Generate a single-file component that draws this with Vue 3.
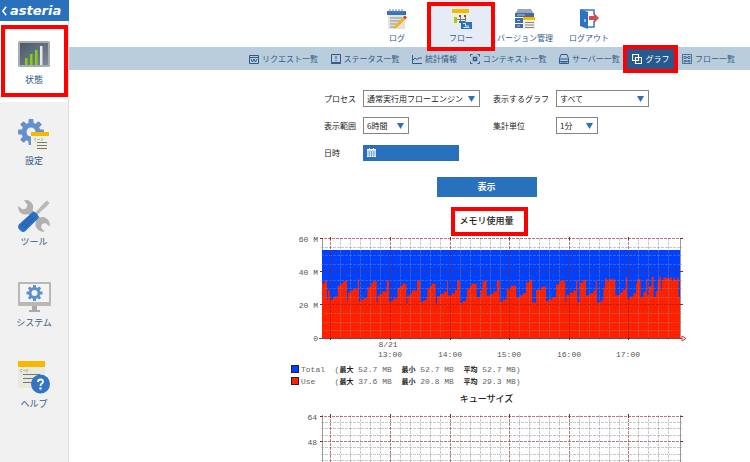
<script setup>
import { ref } from 'vue'

const process = ref('通常実行用フローエンジン')
const graph = ref('すべて')
const range = ref('6時間')
const unit = ref('1分')
const date = ref('')

const gap = '  '
const legend = [
  { key: 'total', text: 'Total  (', max: ' 52.7 MB', min: ' 52.7 MB', avg: ' 52.7 MB)' },
  { key: 'use', text: 'Use    (', max: ' 37.6 MB', min: ' 20.8 MB', avg: ' 29.3 MB)' },
]

const hours = [
  { x: 44, label: '' },
  { x: 104, label: '13:00' },
  { x: 164, label: '14:00' },
  { x: 223, label: '15:00' },
  { x: 283, label: '16:00' },
  { x: 342, label: '17:00' },
]
const minorX = []
hours.forEach((h) => {
  for (let i = 1; i < 6; i++) {
    const x = h.x + Math.round(i * 9.93)
    if (x < 392) minorX.push(x)
  }
})
const minorY = [11, 19, 28, 44, 52, 61, 77, 86, 94]
const minorQueueY = [9, 15, 22, 34, 41, 47]

// Steps of used memory: [start, level], three units to a pixel
const usage = [
  [126, 248], [134, 241], [141, 297], [144, 270], [149, 298], [159, 292], [163, 288], [173, 256],
  [181, 250], [189, 243], [195, 241], [201, 300], [204, 276], [213, 270], [219, 265], [233, 236],
  [237, 303], [243, 298], [250, 293], [262, 260], [272, 250], [278, 242], [290, 307], [293, 285],
  [299, 280], [306, 273], [320, 240], [327, 304], [334, 300], [340, 294], [352, 262], [362, 255],
  [368, 250], [379, 309], [382, 285], [390, 278], [396, 270], [411, 240], [421, 304], [430, 299],
  [440, 290], [442, 264], [450, 256], [456, 250], [467, 309], [471, 287], [480, 280], [492, 274],
  [501, 242], [504, 285], [515, 278], [525, 268], [531, 241], [540, 307], [548, 302], [558, 293],
  [561, 264], [570, 256], [575, 250], [590, 290], [601, 270], [607, 245], [612, 241], [620, 285],
  [630, 280], [640, 273], [650, 241], [659, 303], [668, 297], [680, 266], [692, 256], [709, 290],
  [720, 284], [728, 278], [738, 246], [748, 238], [757, 306], [768, 268], [784, 258], [798, 301],
  [807, 296], [816, 290], [828, 252], [839, 241], [856, 305], [859, 283], [870, 276], [880, 270],
  [888, 240], [892, 304], [900, 246], [910, 238], [918, 285], [928, 278], [940, 270], [947, 241],
  [951, 306], [962, 300], [970, 262], [975, 234], [982, 242], [986, 236], [1006, 284], [1020, 276],
  [1028, 268], [1037, 230], [1042, 295], [1050, 288], [1060, 278], [1068, 250], [1071, 236],
  [1082, 290], [1090, 275], [1098, 235], [1102, 285], [1107, 257], [1115, 229], [1121, 290],
  [1127, 272], [1133, 240], [1138, 228], [1143, 270], [1146, 240], [1150, 232], [1167, 235],
  [1171, 229], [1175, 240], [1180, 232], [1185, 238], [1192, 230], [1196, 290],
]
const usagePath = 'M126 413' + usage.map(([x, y]) => `H${x}V${y}`).join('') + 'H1200V413Z'
</script>

<template>
  <div class="shell">
    <aside class="sidebar">
      <a class="brand" href="#">
        <svg class="back" viewBox="0 0 6 12"><path d="M5 1 1 6l4 5" /></svg>
        <span>asteria</span>
      </a>

      <a class="tile active marked" href="#">
        <svg viewBox="0 0 32 32">
          <defs>
            <linearGradient id="screen" x1="0" y1="0" x2="1" y2="1">
              <stop offset="0" stop-color="#4b5a67" /><stop offset="1" stop-color="#7b8792" />
            </linearGradient>
          </defs>
          <rect y="3" width="32" height="26" rx="1.500" fill="#a6adb3" />
          <rect x="2" y="5" width="28" height="22" fill="url(#screen)" />
          <path d="M7 27v-7h2.500v7zM12 27V16h2.500v11zM17 27V12h2.500v15z" fill="#84cf13" />
          <path d="M22 27V8h2.500v19z" fill="#e5e8ea" />
        </svg>
        <span>状態</span>
      </a>

      <a class="tile" href="#">
        <svg viewBox="0 0 32 32">
          <g fill="#658fce">
            <circle cx="13" cy="13" r="9.5" />
            <g>
              <rect v-for="a in 4" :key="a" x="10.500" y="0" width="5" height="26" rx="1" :transform="`rotate(${a * 45} 13 13)`" />
            </g>
          </g>
          <circle cx="13" cy="13" r="4.500" fill="#f1f1f1" />
          <path d="M13 13h18v18H13z" fill="#f0f0e4" />
          <path d="M13 13h18v4H13z" fill="#f9b800" />
          <path d="m18 19-2 1.500 2 1.500m5-3 2 1.500-2 1.500M19 20.500h3" fill="none" stroke="#999" stroke-width=".7" />
          <path d="M19 23.500h10M19 26.500h10M19 29.500h10" stroke="#777" />
        </svg>
        <span>設定</span>
      </a>

      <a class="tile" href="#">
        <svg viewBox="0 0 32 32">
          <path d="M6 .5a7 7 0 0 1 8.500 9.500L22 17.500a7.500 7.500 0 0 1 9.500 9l-4-3.500-3.500 1-1 3.500 3.500 4a7.500 7.500 0 0 1-8.500-10L10 14A7 7 0 0 1 .5 6l4 3.500L8 8.500 9.500 5z" fill="#b1b1b1" />
          <path d="m17 13 9-10 3-2.500 2.500 2.500L29 6 19 15z" fill="#b9b9b9" />
          <path d="M14 12.500q2-1.500 4 .5l1.500 1.500q2 2 .5 4L7.500 31q-2.500 2-4.500 0L.8 29q-1.500-2 0-4.500z" fill="#2c70c4" />
          <path d="M13 16 3.500 26M15.500 18 6 28" stroke="#1f59a5" />
        </svg>
        <span>ツール</span>
      </a>

      <a class="tile" href="#">
        <svg viewBox="0 0 32 32">
          <rect y="1" width="33" height="24" rx="1" fill="#b8b8b8" />
          <path d="M2 3h29v18H2z" fill="#f4f4f4" />
          <path d="M14 25h5v4h3v2H11v-2h3z" fill="#aaa" />
          <g fill="#5c91cc">
            <circle cx="16.500" cy="12" r="6" />
            <rect v-for="a in 4" :key="a" x="15" y="4" width="3" height="16" rx=".5" :transform="`rotate(${a * 45} 16.5 12)`" />
          </g>
          <circle cx="16.500" cy="12" r="3" fill="#f4f4f4" />
        </svg>
        <span>システム</span>
      </a>

      <a class="tile" href="#">
        <svg viewBox="0 0 32 32">
          <path d="M0 0h27v26H0z" fill="#e7eadc" />
          <path d="M0-1h27v6H0z" fill="#f9b800" />
          <path d="M4 7 2 8.500 4 10m4-3 2 1.500L8 10M5 8.500h3" fill="none" stroke="#999" stroke-width=".7" />
          <path d="M5 12.500h17M5 16.500h12M5 20.500h9" stroke="#777" />
          <circle cx="22.500" cy="22" r="9.500" fill="#3274c6" />
          <path d="M20 20q0-2.500 2.500-2.500T25 19.700q0 1.300-1.300 1.900T22.500 24" fill="none" stroke="#fff" stroke-width="1.800" />
          <circle cx="22.500" cy="26.500" r="1.200" fill="#fff" />
        </svg>
        <span>ヘルプ</span>
      </a>
    </aside>

    <div class="page">
      <nav class="topnav">
        <a href="#">
          <svg viewBox="0 0 20 20">
            <path d="M1 2h17v18H1z" fill="#e4e4de" />
            <path d="M0 2h19v4H0z" fill="#2d75c2" />
            <path d="M3 0v4M6 0v4M9 0v4M12 0v4M15 0v4" stroke="#70859b" />
            <path d="M3 9h12M3 12h11M3 15h8M3 18h5" stroke="#8d8f91" />
            <path d="m16.500 8 2 2L10 18.500 7 20l1-3.500z" fill="#f5b21a" />
            <path d="m16 8 2-1.500 2 2L18 10.500z" fill="#e33b2e" />
          </svg>
          <span>ログ</span>
        </a>
        <a class="current marked" href="#">
          <svg viewBox="0 0 20 20">
            <path d="M1 0h17v15H1z" fill="#efefdc" />
            <path d="M1 0h17v4H1z" fill="#f9b800" />
            <path d="M3 8h3v6H3z" fill="#9bcd25" />
            <path d="M6 10.500h9M9.500 7v6M14.500 7v5" stroke="#777" fill="none" />
            <path d="M8 6h2v2H8zM13 6h2v2h-2zM8 12h2v2H8z" fill="#657" />
            <path d="M10 12h4l1 1h6v7H10z" fill="#2c72c0" />
            <path d="M12 14.500h2.500V17H18M12.500 18.500h6" stroke="#d8e7f7" fill="none" />
          </svg>
          <span>フロー</span>
        </a>
        <a href="#">
          <svg viewBox="0 0 20 20">
            <path d="M3 0h13l3 5H0z" fill="#9ca7b4" />
            <path d="M0 4h19v4H0zM0 9h8v5H0zM0 15h8v4H0z" fill="#456b9e" />
            <path d="M2 6h8M2 11.500h3M2 17h3" stroke="#adc3df" />
            <path d="M8 8h12v12H8z" fill="#f0f0e2" />
            <path d="M8 8h12v3H8z" fill="#f9b800" />
            <path d="M10 13.500h9M10 16h9M10 18.500h9" stroke="#888" />
          </svg>
          <span>バージョン管理</span>
        </a>
        <a href="#">
          <svg viewBox="0 0 20 20">
            <path d="M2 1h13v5M15 12v6H8" fill="none" stroke="#3678c3" stroke-width="1.500" />
            <path d="m1 0 8 3v17l-8-3z" fill="#2e73c2" />
            <path d="M6 10v3" stroke="#fff" />
            <path d="M10 7h5V4l5 5-5 5v-3h-5z" fill="#d74a4a" />
          </svg>
          <span>ログアウト</span>
        </a>
      </nav>

      <nav class="subnav">
        <a href="#">
          <svg viewBox="0 0 10 10"><path d="M.5 1.500h9v8h-9zM.5 3.500h9M2 5l1.500 3L5 5l1.500 3L8 5" /></svg>
          リクエスト一覧
        </a>
        <a href="#">
          <svg viewBox="0 0 10 10"><path d="M.5.5h9v8h-9zM0 9.500h10M5 2v3M5 6v1" /></svg>
          ステータス一覧
        </a>
        <a href="#">
          <svg viewBox="0 0 10 10"><path d="M.5 1v8.500H10M1 6l2-2 2 1.500L7 4h3" /></svg>
          統計情報
        </a>
        <a href="#">
          <svg viewBox="0 0 10 10"><path d="M2.500.5h-2v2M7.500.5h2v2M.5 7.500v2h2M9.500 7.500v2h-2" /><path d="M3.500 3.500h3v3h-3z" stroke-width="1.500" /></svg>
          コンテキスト一覧
        </a>
        <a href="#">
          <svg viewBox="0 0 10 10"><path d="M2 .5h6l1.500 4v5h-9v-5zM.5 5h9M.5 7.500h9M2 9h6" /></svg>
          サーバー一覧
        </a>
        <a class="current marked" href="#">
          <svg viewBox="0 0 10 10"><path d="M.5.5h6v6h-6zM3.500 3.500h6v6h-6z" stroke-width="1.200" /></svg>
          グラフ
        </a>
        <a href="#">
          <svg viewBox="0 0 10 10"><path d="M.5.5h9v9h-9zM2 2.500h2v2H2zM6 2.500h2v2H6zM2 6.500h2v1.500H2zM6 6.500h2v1.500H6zM4 3.500h2M4 7h2" stroke-width=".8" /></svg>
          フロー一覧
        </a>
      </nav>

      <main class="content">
        <form class="filters" @submit.prevent>
          <div class="fields">
            <label for="process">プロセス</label>
            <div class="pick process">
              <select id="process" v-model="process"><option>通常実行用フローエンジン</option></select>
            </div>
            <label for="graph">表示するグラフ</label>
            <div class="pick wide">
              <select id="graph" v-model="graph"><option>すべて</option></select>
            </div>
            <label for="range">表示範囲</label>
            <div class="pick range">
              <select id="range" v-model="range"><option>6時間</option></select>
            </div>
            <label for="unit">集計単位</label>
            <div class="pick unit">
              <select id="unit" v-model="unit"><option>1分</option></select>
            </div>
            <label for="date">日時</label>
            <div class="date">
              <svg viewBox="0 0 9 9">
                <path d="M0 1h9v8H0z" fill="#fff" />
                <path d="M2.500 0v2M6.500 0v2" stroke="#fff" />
                <path d="M0 3h9M0 5h9M0 7h9M2.250 3v6M4.500 3v6M6.750 3v6" stroke="#2a71bd" stroke-width=".5" />
              </svg>
              <input id="date" v-model="date" type="text">
            </div>
          </div>
          <button type="submit">表示</button>
        </form>

        <section class="chart">
          <h2 class="first"><span class="marked">メモリ使用量</span></h2>
          <svg class="memory" viewBox="0 0 401 126">
            <path d="M36 14h358v88H36z" fill="#0040ff" />
            <svg x="36" y="3" width="358" height="99" viewBox="126 115 1074 298" preserveAspectRatio="none">
              <path :d="usagePath" fill="#ff2000" />
            </svg>
            <g class="minor">
              <path v-for="x in minorX" :key="'x' + x" :d="`M${x}.5 2V104`" />
              <path v-for="y in minorY" :key="'y' + y" :d="`M35 ${y}.5H396`" />
            </g>
            <g class="major">
              <path v-for="h in hours" :key="h.x" :d="`M${h.x}.5 2V104`" />
              <path d="M34 2.500H396M34 35.500H396M34 68.500H396" />
            </g>
            <path d="M36.500 2v12M394.500 2v100" class="axis" />
            <path d="M33 102.500h364" stroke="#844" />
            <path d="m396 100 4 2.500-4 2.500z" fill="#fff" stroke="#f22" />
            <g class="ticks">
              <path v-for="h in hours" :key="h.x" :d="`M${h.x}.5 1v3M${h.x}.5 101v3`" />
              <path d="M34 2.500h3M34 35.500h3M34 68.500h3M394 2.500h3M394 35.500h3M394 68.500h3" />
            </g>
            <g class="scale end">
              <text x="32" y="6">60 M</text>
              <text x="32" y="39">40 M</text>
              <text x="32" y="72">20 M</text>
              <text x="32" y="105">0</text>
            </g>
            <g class="scale">
              <text x="102" y="111">8/21</text>
              <text v-for="h in hours" :key="h.x" :x="h.x" y="121">{{ h.label }}</text>
            </g>
          </svg>
          <ul class="legend">
            <li v-for="row in legend" :key="row.key">
              <i :class="row.key"></i>
              <span>{{ row.text }}<b>最大</b>{{ row.max + gap }}<b>最小</b>{{ row.min + gap }}<b>平均</b>{{ row.avg }}</span>
            </li>
          </ul>
        </section>

        <section class="chart">
          <h2>キューサイズ</h2>
          <svg class="queue" viewBox="0 0 401 49">
            <g class="minor">
              <path v-for="x in minorX" :key="'x' + x" :d="`M${x}.5 2V49`" />
              <path v-for="y in minorQueueY" :key="'y' + y" :d="`M35 ${y}.5H396`" />
            </g>
            <g class="major">
              <path v-for="h in hours" :key="h.x" :d="`M${h.x}.5 2V49`" />
              <path d="M34 3.500H396M34 28.500H396" />
            </g>
            <path d="M36.500 2v47M394.500 2v47" class="axis" />
            <g class="ticks">
              <path v-for="h in hours" :key="h.x" :d="`M${h.x}.5 1v4`" />
              <path d="M34 3.500h3M34 28.500h3M394 3.500h3M394 28.500h3" />
            </g>
            <g class="scale end">
              <text x="31" y="7">64</text>
              <text x="31" y="32">48</text>
            </g>
          </svg>
        </section>
      </main>
    </div>
  </div>
</template>

<style>
body {
  margin: 0;
  background: #fff;
}
</style>

<style scoped>
.shell {
  display: flex;
  min-height: 100vh;
  font-family: "Noto Sans CJK JP", sans-serif;
  font-size: 8px;
  line-height: 12px;
  color: #222;
}
.shell * {
  box-sizing: border-box;
}
a {
  text-decoration: none;
  color: #315a87;
}
svg {
  display: block;
}

.marked {
  position: relative;
}
.marked::after {
  content: "";
  position: absolute;
  border: 4px solid #f00;
  pointer-events: none;
  z-index: 1;
}

.sidebar {
  flex: none;
  width: 69px;
  background: #f1f1f1;
  border-right: 1px solid #dedede;
}
.brand {
  display: flex;
  align-items: center;
  gap: 3px;
  height: 21px;
  padding-left: 2px;
  margin-right: -1px;
  background: #2a71bd;
  color: #fff;
  font: italic bold 13px "DejaVu Sans", sans-serif;
}
.back {
  width: 5px;
  height: 12px;
  fill: none;
  stroke: #fff;
  stroke-width: 2px;
}
.tile {
  display: flex;
  flex-direction: column;
  align-items: center;
  gap: 4px;
  height: 81px;
  padding-top: 17px;
  font-size: 9px;
}
.tile svg {
  width: 32px;
  height: 32px;
  overflow: visible;
}
.tile.active {
  background: #fff;
}
.tile.marked::after {
  inset: 4px 0 5px 1px;
}

.page {
  flex: 1;
  min-width: 0;
}
.topnav {
  display: flex;
  justify-content: center;
  height: 47px;
  padding-left: 167px;
}
.topnav a {
  display: flex;
  flex-direction: column;
  align-items: center;
  gap: 3px;
  width: 64px;
  padding-top: 9px;
  white-space: nowrap;
}
.topnav svg {
  width: 20px;
  height: 20px;
  overflow: visible;
}
.topnav .current {
  background: #e6ecf5;
}
.topnav .marked::after {
  inset: 2px -2px -4px;
}
.subnav {
  display: flex;
  justify-content: space-between;
  height: 23px;
  padding: 0 9px 0 174px;
  background: #bacddd;
}
.subnav a {
  display: flex;
  align-items: center;
  gap: 3px;
  padding: 0 6px;
  white-space: nowrap;
}
.subnav svg {
  width: 10px;
  height: 10px;
  fill: none;
  stroke: #315a87;
}
.subnav .current {
  background: #26598d;
  color: #fff;
}
.subnav .current svg {
  stroke: #fff;
}
.subnav .marked::after {
  inset: -2px -3px -3px;
}

.content {
  display: flex;
  flex-direction: column;
  align-items: center;
  padding: 20px 0 0 154px;
}
.filters {
  display: flex;
  flex-direction: column;
  align-items: center;
  gap: 16px;
}
.fields {
  display: grid;
  grid-template-columns: 39px 130px 63px 93px;
  grid-auto-rows: 17px;
  row-gap: 10px;
  align-items: center;
}
.fields label {
  white-space: nowrap;
}
.pick {
  position: relative;
  height: 17px;
}
.pick::after {
  content: "";
  position: absolute;
  right: 5px;
  top: 6px;
  width: 7px;
  height: 6px;
  background: #2a71bd;
  clip-path: polygon(0 0, 100% 0, 50% 100%);
  pointer-events: none;
}
.pick.process {
  width: 117px;
}
.pick.wide {
  width: 93px;
}
.pick.range {
  width: 46px;
}
.pick.unit {
  width: 42px;
}
select {
  display: block;
  width: 100%;
  height: 100%;
  padding: 0 0 0 3px;
  appearance: none;
  border: 1px solid #85857d;
  border-radius: 0;
  background: #fff;
  color: #222;
  font: inherit;
}
.date {
  display: flex;
  align-items: center;
  width: 96px;
  height: 16px;
  padding-left: 4px;
  background: #2a71bd;
}
.date svg {
  flex: none;
  width: 9px;
  height: 9px;
}
.date input {
  flex: 1;
  min-width: 0;
  height: 100%;
  padding: 0 4px;
  border: 0;
  background: none;
  color: #fff;
  font: inherit;
}
button {
  width: 100px;
  height: 20px;
  padding: 0;
  border: 0;
  background: #2a71bd;
  color: #fff;
  font: bold 9px/12px "Noto Sans CJK JP", sans-serif;
}

.chart {
  width: 401px;
}
h2 {
  margin: 0;
  height: 26px;
  font-size: 9px;
  font-weight: 500;
  line-height: 24px;
  text-align: center;
}
h2.first {
  height: 39px;
  padding-top: 12px;
}
h2 .marked {
  display: inline-block;
  height: 24px;
  line-height: 24px;
}
h2 .marked::after {
  inset: -2px -14px -3px -8px;
}
.memory,
.queue {
  width: 100%;
}
.minor {
  stroke: #888;
  stroke-opacity: .45;
  stroke-dasharray: 3 1;
}
.major {
  stroke: #8b2525;
  stroke-opacity: .6;
  stroke-dasharray: 3 1;
}
.axis {
  stroke: #999;
}
.ticks {
  stroke: #8b2525;
}
.scale {
  font: 8px "Liberation Mono", monospace;
  fill: #555;
  text-anchor: middle;
}
.scale.end {
  text-anchor: end;
}
.scale text {
  white-space: pre;
}
.legend {
  margin: 0;
  padding: 1px 0 0 5px;
  list-style: none;
  font-family: "Liberation Mono", "Noto Sans CJK JP", monospace;
  color: #666;
}
.legend li {
  display: flex;
  align-items: center;
  gap: 2px;
  height: 12px;
  white-space: pre;
}
.legend i {
  width: 8px;
  height: 8px;
  border: 1px solid #222;
}
.legend .total {
  background: #0040ff;
}
.legend .use {
  background: #ff2000;
}
.legend b {
  font-family: "Noto Sans CJK JP", sans-serif;
  font-size: 7px;
  color: #222;
}
</style>
